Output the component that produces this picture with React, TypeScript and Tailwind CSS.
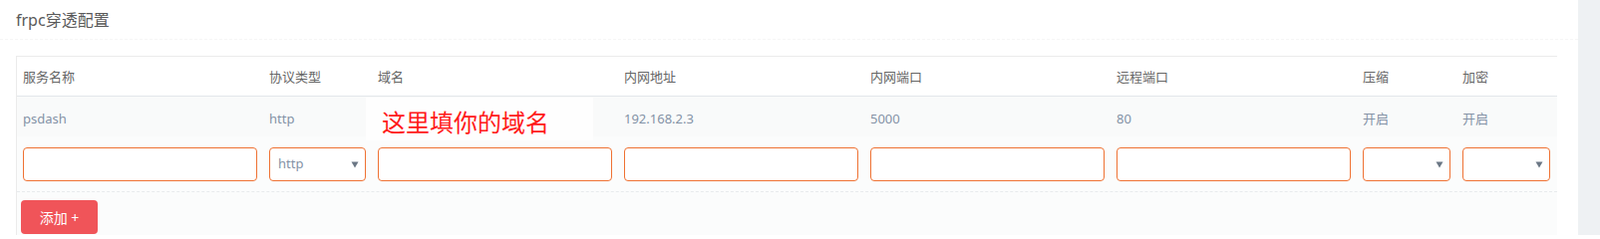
import React from "react";

const FONT = "font-['Noto_Sans','Noto_Sans_CJK_SC',sans-serif]";

const COLS = "grid grid-cols-[247px_109px_247px_247px_247px_247px_100px_100px]";

const HEADERS = ["服务名称", "协议类型", "域名", "内网地址", "内网端口", "远程端口", "压缩", "加密"];
const ROW = ["psdash", "http", "", "192.168.2.3", "5000", "80", "开启", "开启"];

function Arrow() {
  return (
    <svg width="8" height="7" viewBox="0 0 8 7" className="shrink-0">
      <path d="M0.5 0.5 L7.5 0.5 L4 6.5 Z" fill="#6b7785" />
    </svg>
  );
}

function TextInput() {
  return <div className="h-[34px] w-full rounded-[4px] border border-[#ef7233] bg-white" />;
}

function SelectBox({ value }: { value?: string }) {
  return (
    <div className="flex h-[34px] w-full items-center justify-between rounded-[4px] border border-[#ef7233] bg-white pl-[8px] pr-[6px]">
      <span className="text-[13px] text-[#8492a6]">{value ?? ""}</span>
      <Arrow />
    </div>
  );
}

export default function App() {
  return (
    <div className={`relative flex h-[236px] w-[1605px] overflow-hidden bg-white ${FONT}`}>
      <div className="flex-1">
        {/* title */}
        <div className="flex h-[40px] items-center border-b border-dashed border-[#f6f6f6] pl-[16px] text-[16px] text-[#5a5a5a]">
          frpc穿透配置
        </div>

        {/* table */}
        <div className="ml-[16px] mt-[16px] w-[1546px] border-l border-t border-[#ebebeb] bg-[#fbfcfc]">
          <div className={`${COLS} h-[40px] items-center border-b border-[#e3e7ea] bg-white pt-[2px] text-[13px] text-[#666]`}>
            {HEADERS.map((h) => (
              <div key={h} className="px-[6px]">
                {h}
              </div>
            ))}
          </div>

          <div className={`${COLS} h-[40px] items-center bg-[#f9fafa] pt-[5px] text-[13px] text-[#8492a6]`}>
            {ROW.map((v, i) => (
              <div key={i} className="px-[6px]">
                {v}
              </div>
            ))}
          </div>

          <div className={`${COLS} h-[56px] border-b border-dashed border-[#e8ebed] pt-[11px]`}>
            <div className="px-[6px]"><TextInput /></div>
            <div className="px-[6px]"><SelectBox value="http" /></div>
            <div className="px-[6px]"><TextInput /></div>
            <div className="px-[6px]"><TextInput /></div>
            <div className="px-[6px]"><TextInput /></div>
            <div className="px-[6px]"><TextInput /></div>
            <div className="px-[6px]"><SelectBox /></div>
            <div className="px-[6px]"><SelectBox /></div>
          </div>

          <div className="h-[60px] pl-[4px] pt-[8px]">
            <button className="h-[34px] w-[77px] rounded-[4px] bg-[#f05459] text-[14px] text-white">
              添加 +
            </button>
          </div>
        </div>
      </div>

      {/* right scroll gutter */}
      <div className="w-[22px] bg-[#eef1f3]" />

      {/* pasted annotation */}
      <div className="absolute left-[367px] top-[98px] h-[43px] w-[228px] bg-[#fefefe] pl-[16px] pt-[13px] text-[24px] leading-[24px] text-[#ff1a1a]">
        这里填你的域名
      </div>
    </div>
  );
}
